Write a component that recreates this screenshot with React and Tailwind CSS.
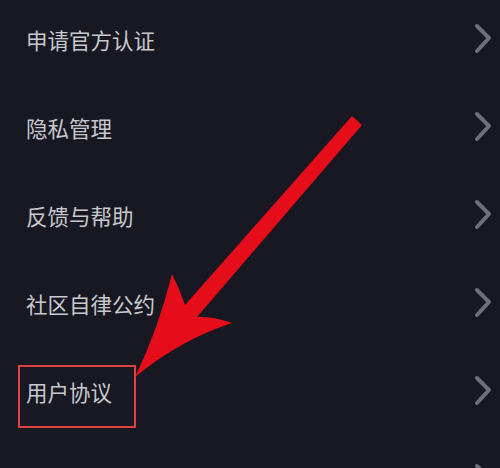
const items = ["申请官方认证", "隐私管理", "反馈与帮助", "社区自律公约", "用户协议", "个人信息清单"];

const Chevron = () => (
  <svg width="22" height="32" viewBox="0 0 22 32" fill="none" className="shrink-0">
    <polyline
      points="5,3 17,15 5,28"
      stroke="#6c6e78"
      strokeWidth="4"
      strokeLinecap="round"
      strokeLinejoin="round"
    />
  </svg>
);

export default function App() {
  return (
    <div className="relative w-[500px] h-[468px] overflow-hidden bg-[#171822] font-['Noto_Sans_CJK_SC',sans-serif]">
      <ul className="-mt-1">
        {items.map((item, idx) => (
          <li key={idx} className="relative flex h-[88px] items-center justify-between pl-[26px] pr-[6px]">
            <span className="text-[21.5px] leading-none text-[#c8c9ce]">{item}</span>
            <div className="-mt-[3px]">
              <Chevron />
            </div>
            {/* highlight box on 用户协议 */}
            {idx === 4 && (
              <div className="absolute left-[18px] top-[17px] h-[63px] w-[118px] border-2 border-[#e0403e]" />
            )}
          </li>
        ))}
      </ul>

      {/* red arrow annotation */}
      <svg className="absolute inset-0 pointer-events-none" width="500" height="468" viewBox="0 0 500 468">
        <path
          d="M352,116 L362,125 L197,317 Q214,316 232,323 Q180,340 135,377 Q158,330 172,274 Q180,290 185,305 Z"
          fill="#e60d1a"
        />
      </svg>
    </div>
  );
}
